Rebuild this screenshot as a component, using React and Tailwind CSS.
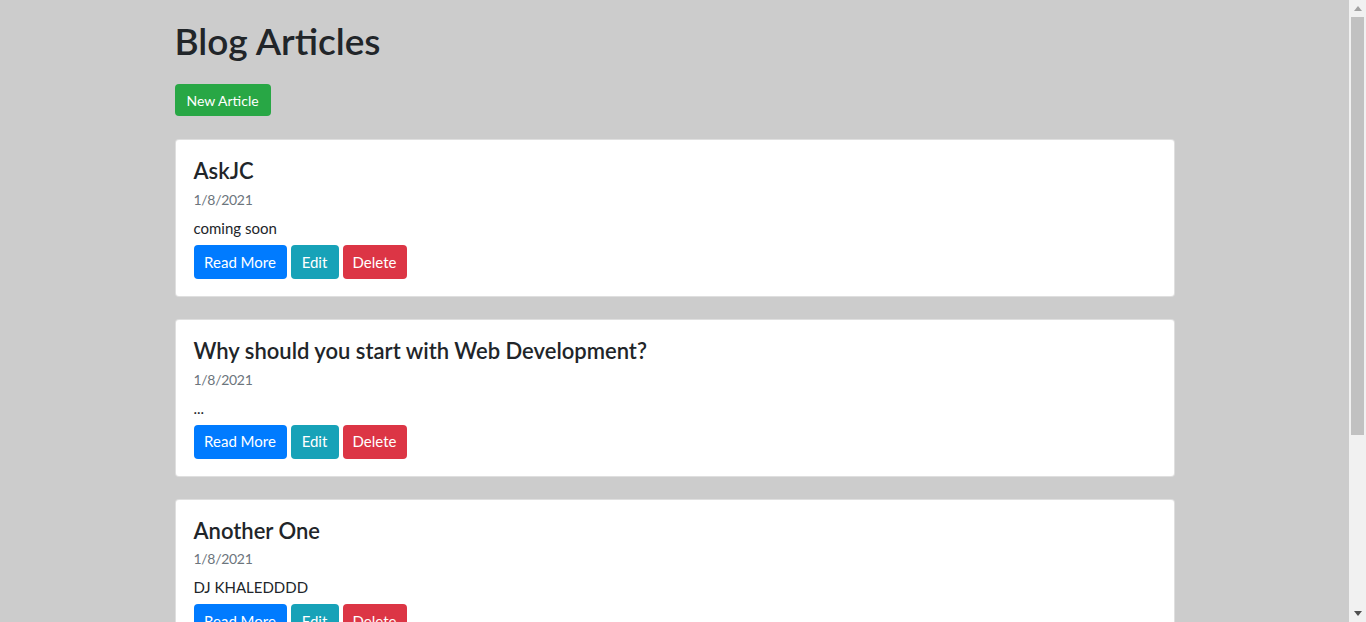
import React from 'react';

const articles = [
  { title: 'AskJC', date: '1/8/2021', text: 'coming soon' },
  { title: 'Why should you start with Web Development?', date: '1/8/2021', text: '...' },
  { title: 'Another One', date: '1/8/2021', text: 'DJ KHALEDDDD' },
];

const font = { fontFamily: 'Lato, "Open Sans", Arial, sans-serif' };

const ArticleCard = ({ article }) => (
  <div className="mb-[22px] rounded-[4px] border border-black/[0.125] bg-white px-[18px] pt-[17px] pb-[17px]">
    <h4 className="text-[22px] leading-[28.8px] font-semibold text-[#212529]">{article.title}</h4>
    <div className="mt-[3px] text-[14px] leading-[21px] tracking-[-0.3px] text-[#6c757d]">{article.date}</div>
    <div className="mt-[8px] text-[15px] leading-[21px] text-[#212529]">{article.text}</div>
    <div className="mt-[6px] flex gap-[4px]">
      <a className="flex h-[34px] w-[93px] items-center justify-center rounded-[4px] bg-[#007bff] text-[15px] text-white">Read More</a>
      <a className="flex h-[34px] w-[48px] items-center justify-center rounded-[4px] bg-[#17a2b8] text-[15px] text-white">Edit</a>
      <a className="flex h-[34px] w-[64px] items-center justify-center rounded-[4px] bg-[#dc3545] text-[15px] text-white">Delete</a>
    </div>
  </div>
);

// fake browser scrollbar, the page overflows in the screenshot
const Scrollbar = () => (
  <div className="flex h-full w-[17px] flex-col bg-[#f1f1f1]">
    <div className="flex h-[17px] items-center justify-center">
      <svg width="8" height="5" viewBox="0 0 8 5"><polygon points="0,5 8,5 4,0" fill="#a3a3a3" /></svg>
    </div>
    <div className="mx-[2px] h-[418px] bg-[#c1c1c1]" />
    <div className="flex-1" />
    <div className="flex h-[17px] items-center justify-center">
      <svg width="8" height="5" viewBox="0 0 8 5"><polygon points="0,0 8,0 4,5" fill="#505050" /></svg>
    </div>
  </div>
);

export default function App() {
  return (
    <div className="flex h-[622px] w-[1366px] overflow-hidden bg-[#cccccc]" style={font}>
      <div className="min-w-0 flex-1">
        <div className="mx-auto w-[1000px] pt-[17px]">
          <h1 className="text-[37px] leading-[48px] font-semibold text-[#212529]">Blog Articles</h1>
          <div className="mt-[19px] mb-[23px]">
            <button className="flex h-[32px] w-[96px] items-center justify-center rounded-[4px] bg-[#28a745] text-[14px] text-white">
              New Article
            </button>
          </div>
          {articles.map((a, i) => (
            <ArticleCard key={i} article={a} />
          ))}
        </div>
      </div>
      <Scrollbar />
    </div>
  );
}
